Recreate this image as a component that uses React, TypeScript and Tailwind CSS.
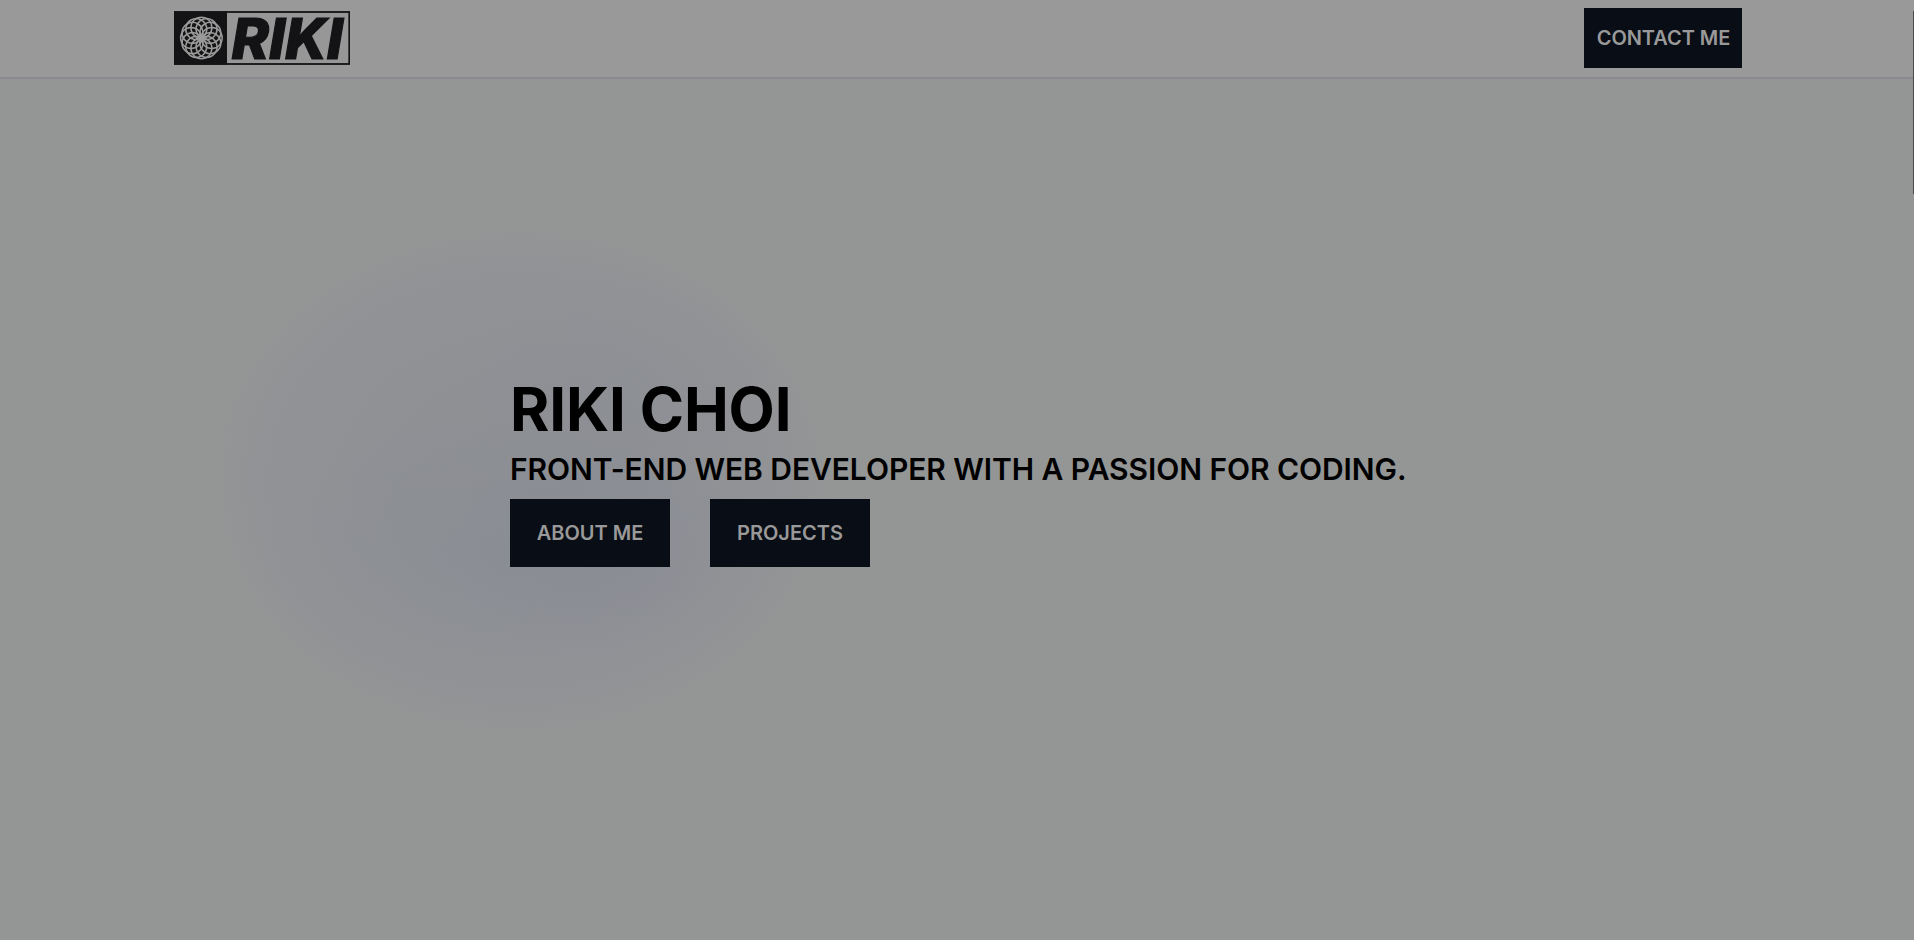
const PETALS = Array.from({ length: 12 }, (_, i) => i * 30);

function Logo() {
  return (
    <svg width="176" height="54" viewBox="0 0 176 54" role="img" aria-label="RIKI">
      <rect x="0.75" y="1" width="174.5" height="52" fill="#979798" stroke="#131214" strokeWidth="1.8" />
      <rect x="0" y="0.5" width="53" height="53" fill="#131214" />
      <g fill="none" stroke="#9a9a9a" strokeWidth="1.5">
        {PETALS.map((a) => (
          <circle key={a} cx="37.7" cy="27" r="10.5" transform={`rotate(${a} 27.4 27)`} />
        ))}
      </g>
      <circle cx="27.4" cy="27" r="3.4" fill="#9a9a9a" />
      <text
        x="57.5"
        y="48"
        fill="#131214"
        stroke="#131214"
        strokeWidth="1.2"
        textLength="111.5"
        lengthAdjust="spacingAndGlyphs"
        className="font-['Inter'] text-[57px] font-extrabold italic"
      >
        RIKI
      </text>
    </svg>
  );
}

function HeroButton({ label }: { label: string }) {
  return (
    <button className="flex h-[68px] w-40 items-center justify-center bg-[#090d15] text-xl font-semibold text-[#999999]">
      {label}
    </button>
  );
}

export default function App() {
  return (
    <div className="relative flex h-[940px] flex-col overflow-hidden bg-[#949695] font-['Inter',sans-serif]">
      <header className="flex h-[79px] shrink-0 items-start justify-between border-b-2 border-[#89898f] bg-[#999999] pr-[172px] pl-[174px]">
        <div className="pt-[11px]">
          <Logo />
        </div>
        <button className="mt-2 flex h-[60px] w-[158px] items-center justify-center bg-[#090d15] pl-px text-xl font-semibold tracking-[-0.05px] text-[#999999]">
          CONTACT ME
        </button>
      </header>
      <main className="relative flex grow flex-col items-start gap-3 pt-[300px] pl-[510px]">
        <div className="absolute top-[145px] left-[208px] h-[514px] w-[624px] bg-[radial-gradient(closest-side,#8d8f93_0%,#8e9094_40%,#919295_74%,#939496_92%,#949695_100%)]" />
        <div className="absolute top-[195px] left-[460px] h-[260px] w-[320px] bg-[radial-gradient(closest-side,#8a8d9466,#8a8d9400)]" />
        <div className="absolute top-[335px] left-[260px] h-[270px] w-[460px] bg-[radial-gradient(closest-side,#888c9477,#888c9400)]" />
        <div className="absolute top-[370px] left-[450px] h-[210px] w-[310px] bg-[radial-gradient(closest-side,#86899577,#86899500)]" />
        <h1 className="relative text-6xl font-bold tracking-[-0.15px] text-black">RIKI CHOI</h1>
        <h2 className="relative text-3xl font-semibold tracking-[-0.07px] text-black">
          FRONT-END WEB DEVELOPER WITH A PASSION FOR CODING.
        </h2>
        <div className="relative flex gap-10">
          <HeroButton label="ABOUT ME" />
          <HeroButton label="PROJECTS" />
        </div>
      </main>
      <div className="absolute top-[11px] right-0 h-[183px] w-px bg-[#4c4c4e]" />
    </div>
  );
}
